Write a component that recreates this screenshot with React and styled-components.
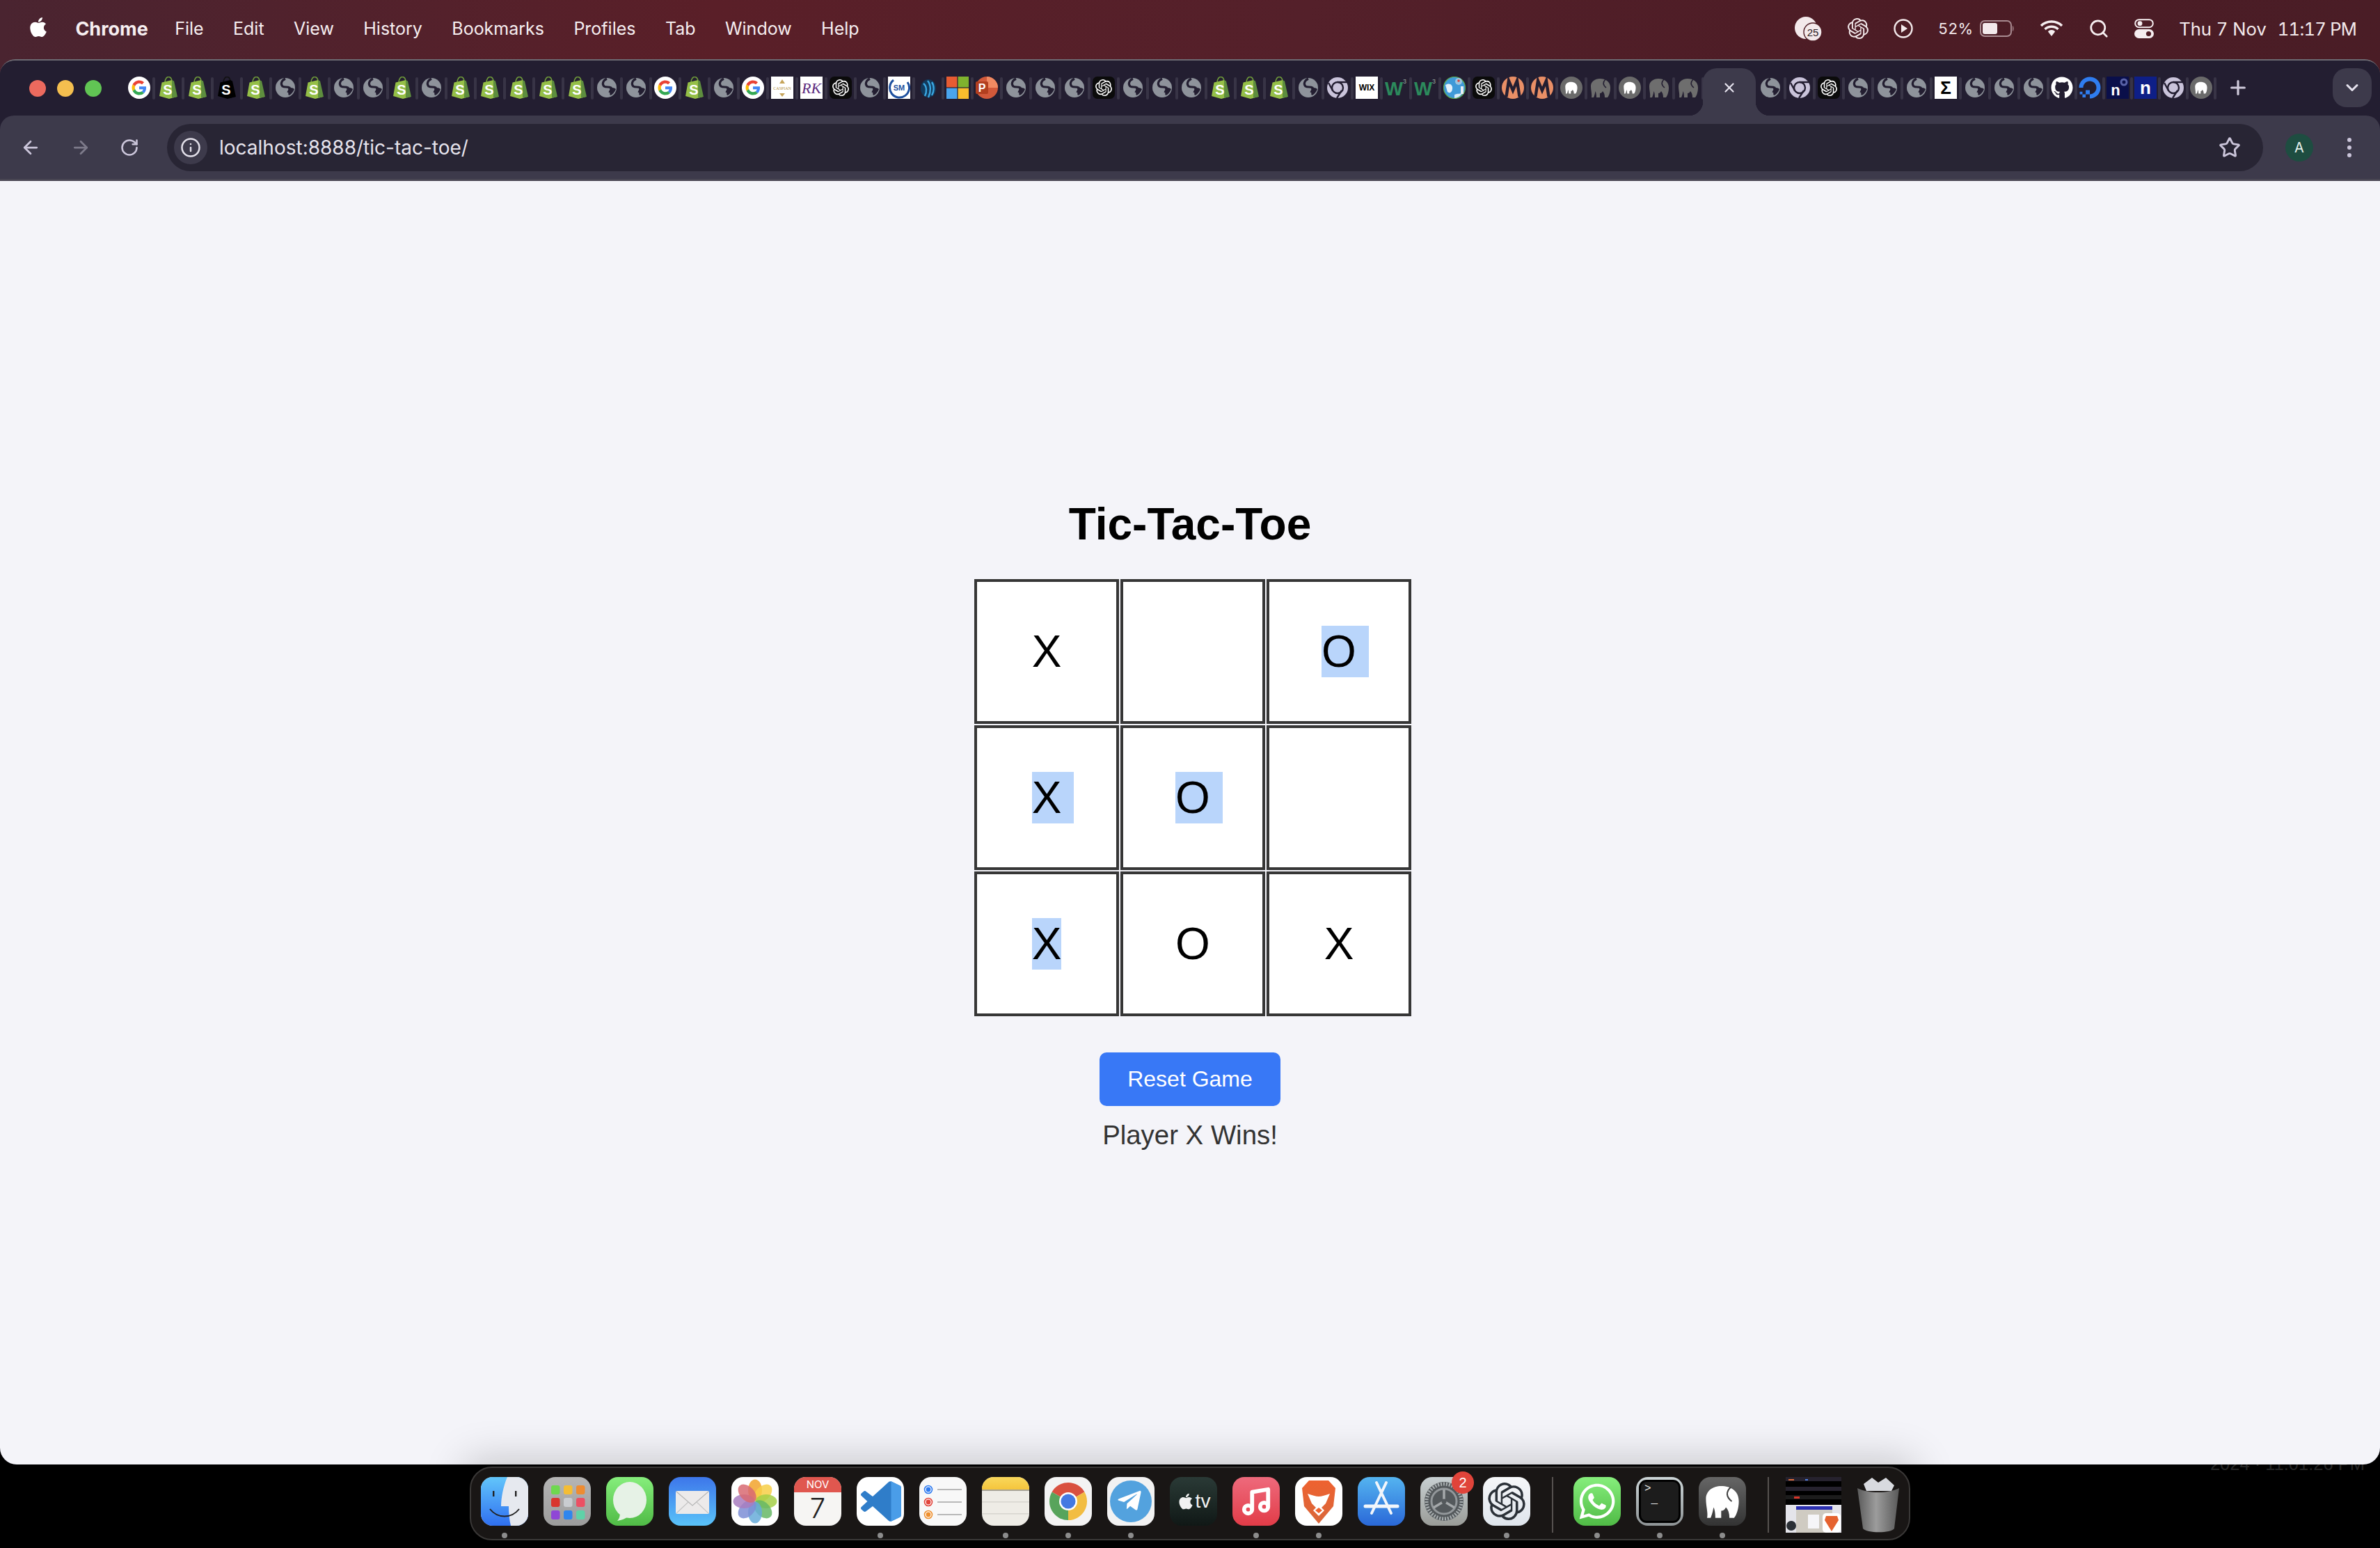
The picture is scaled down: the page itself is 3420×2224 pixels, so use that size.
import React from 'react';
import styled, { createGlobalStyle } from 'styled-components';
import { ArrowLeft, ArrowRight, RotateCw, Info, Star, Plus, ChevronDown, X, Search, Music } from 'lucide-react';
import { FaApple, FaGithub, FaWhatsapp, FaDigitalOcean, FaTelegramPlane } from 'react-icons/fa';
import { SiOpenai } from 'react-icons/si';

const GlobalStyle = createGlobalStyle`
  html, body { margin: 0; padding: 0; background: #000; }
  * { box-sizing: border-box; }
`;

const Screen = styled.div`
  position: relative;
  width: 3420px;
  height: 2224px;
  overflow: hidden;
  display: flex;
  flex-direction: column;
  background: linear-gradient(90deg, #4a2430 0%, #5a1f28 30%, #54202a 55%, #4c1c25 80%, #4a1d26 100%) top / 100% 120px no-repeat #000;
  font-family: Inter, "Liberation Sans", sans-serif;
`;

const WallpaperText = styled.div`
  position: absolute;
  right: 22px;
  bottom: 106px;
  font-size: 25.5px;
  color: #262626;
  font-family: "Liberation Sans", sans-serif;
`;

/* ---- mac menu bar ---- */
const MenuBar = styled.div`
  height: 85px;
  flex: none;
  display: flex;
  align-items: center;
  justify-content: space-between;
  padding: 0 34px 3px 41px;
  color: #fff;
`;

const MenuLeft = styled.div`
  display: flex;
  align-items: center;
  gap: 42.4px;
`;

const AppleLogo = styled(FaApple)`
  width: 28px;
  height: 32px;
  margin-right: -3px;
  margin-bottom: 4px;
`;

const MenuItem = styled.span`
  font-size: ${(props) => (props.$bold ? 27 : 25)}px;
  font-weight: ${(props) => (props.$bold ? 700 : 400)};
  margin-right: ${(props) => (props.$bold ? -4 : 0)}px;
  color: #f6eef0;
`;

const StatusArea = styled.div`
  display: flex;
  align-items: center;
  gap: 36px;
`;

const StatusGroup = styled.div`
  display: flex;
  align-items: center;
  gap: ${(props) => props.$gap}px;
`;

const StatusText = styled.span`
  font-size: ${(props) => props.$size || 25.6}px;
  font-variant-numeric: tabular-nums;
  letter-spacing: ${(props) => (props.$tight ? -0.8 : 0)}px;
  color: #f3e9eb;
  white-space: nowrap;
`;

/* ---- browser ---- */
const Browser = styled.div`
  position: relative;
  z-index: 1;
  height: 2019px;
  flex: none;
  display: flex;
  flex-direction: column;
  border-radius: 22px 22px 24px 24px;
  border-top: 2px solid #6c6a72;
  overflow: hidden;
  background: #231e31;
`;

const TabStrip = styled.div`
  height: 79px;
  flex: none;
  display: flex;
  align-items: flex-end;
  padding-left: 179px;
  background: #231e31;
`;

const Lights = styled.div`
  position: absolute;
  top: 28px;
  left: 42px;
  display: flex;
  gap: 16px;
`;

const Light = styled.span`
  width: 24px;
  height: 24px;
  border-radius: 50%;
  background: ${(props) => props.$color};
`;

const TabCell = styled.div`
  position: relative;
  width: ${(props) => props.$w || 42}px;
  height: 68px;
  flex: none;
  display: flex;
  align-items: center;
  justify-content: center;
  padding-bottom: 12px;
  &::after {
    content: '';
    position: absolute;
    right: -2px;
    top: 13px;
    width: 4px;
    height: 32px;
    border-radius: 2px;
    background: #383446;
  }
`;

const ActiveTab = styled.div`
  position: relative;
  width: 76px;
  height: 68px;
  flex: none;
  display: flex;
  align-items: center;
  justify-content: center;
  padding-bottom: 12px;
  background: #3d3a4b;
  border-radius: 20px 20px 0 0;
  color: #e6e3ee;
  &::before, &::after {
    content: '';
    position: absolute;
    bottom: 0;
    width: 20px;
    height: 20px;
  }
  &::before {
    left: -20px;
    background: radial-gradient(circle at 0 0, transparent 20px, #3d3a4b 20.5px);
  }
  &::after {
    right: -20px;
    background: radial-gradient(circle at 100% 0, transparent 20px, #3d3a4b 20.5px);
  }
`;

const NewTab = styled.div`
  margin-left: 17px;
  height: 68px;
  display: flex;
  align-items: center;
  padding-bottom: 12px;
  color: #cfcadb;
`;

const TabSearch = styled.div`
  position: absolute;
  top: 11px;
  right: 12px;
  width: 56px;
  height: 56px;
  border-radius: 20px;
  background: #3d3a4b;
  display: flex;
  align-items: center;
  justify-content: center;
  color: #e6e3ee;
`;

const Toolbar = styled.div`
  height: 94px;
  flex: none;
  display: flex;
  align-items: center;
  padding: 0 16px 0 0;
  background: #3d3a4b;
  border-radius: 20px 20px 0 0;
  border-bottom: 3px solid #494653;
`;

const NavButton = styled.div`
  width: ${(props) => props.$w}px;
  flex: none;
  display: flex;
  justify-content: center;
  color: ${(props) => (props.$dim ? '#7d7a8a' : '#cbc5da')};
`;

const Omnibox = styled.div`
  width: 3012px;
  height: 68px;
  margin-left: 12px;
  flex: none;
  display: flex;
  align-items: center;
  padding: 0 10px;
  border-radius: 34px;
  background: #282534;
`;

const InfoChip = styled.div`
  width: 48px;
  height: 48px;
  border-radius: 50%;
  background: #3d3a4b;
  display: flex;
  align-items: center;
  justify-content: center;
  color: #e3e0ea;
`;

const AddressText = styled.span`
  margin-left: 17px;
  font-size: 28px;
  color: #e6e3ec;
  flex: 1;
`;

const Avatar = styled.div`
  width: 40px;
  height: 40px;
  margin-left: 32px;
  border-radius: 50%;
  background: #1e4d41;
  display: flex;
  align-items: center;
  justify-content: center;
  color: #e8f2ee;
  font-size: 20px;
`;

const MoreDots = styled.div`
  margin-left: 49px;
  display: flex;
  flex-direction: column;
  gap: 5px;
  span {
    width: 6px;
    height: 6px;
    border-radius: 50%;
    background: #cbc5da;
  }
`;

/* ---- the page itself ---- */
const Page = styled.div`
  position: relative;
  flex: 1;
  overflow: hidden;
  background: #f4f4f9;
  display: flex;
  flex-direction: column;
  align-items: center;
  padding-top: 456px;
  font-family: "Liberation Sans", Arial, sans-serif;
`;

const DockShadow = styled.div`
  position: absolute;
  left: 675px;
  bottom: -60px;
  width: 2070px;
  height: 60px;
  box-shadow: 0 0 60px 6px rgba(0, 0, 0, 0.2);
`;

const Title = styled.h1`
  margin: 0 0 42px;
  font-size: 64px;
  line-height: 74px;
  font-weight: 700;
  color: #000;
`;

const Board = styled.div`
  width: 620px;
  display: grid;
  grid-template-columns: repeat(3, 208px);
  grid-auto-rows: 208px;
  gap: 2px;
`;

const Cell = styled.div`
  border: 4px solid #363636;
  background: #fff;
  display: flex;
  align-items: center;
  justify-content: center;
  font-size: 64px;
  line-height: 74px;
  color: #000;
`;

const Mark = styled.span`
  background: ${(props) => (props.$selected ? '#b9d5fb' : 'transparent')};
  box-shadow: ${(props) => (props.$tail ? '18px 0 0 #b9d5fb' : 'none')};
`;

const ResetButton = styled.button`
  width: 260px;
  height: 77px;
  margin-top: 52px;
  border: 0;
  border-radius: 10px;
  background: #3878f6;
  color: #fff;
  font-family: inherit;
  font-size: 32px;
`;

const Status = styled.div`
  margin-top: 20px;
  font-size: 38.4px;
  color: #333;
`;

/* ---- dock ---- */
const DockRow = styled.div`
  display: flex;
  justify-content: center;
  padding-top: 3px;
`;

const Dock = styled.div`
  width: 2070px;
  height: 106px;
  display: flex;
  align-items: flex-start;
  gap: 22px;
  padding: 13px 0 0 14px;
  background: #191615;
  border: 2px solid #3a3837;
  border-radius: 32px;
`;

const DockItem = styled.div`
  position: relative;
  flex: none;
  width: ${(props) => props.$w || 68}px;
  &::after {
    content: '';
    display: ${(props) => (props.$running ? 'block' : 'none')};
    position: absolute;
    left: 50%;
    bottom: -18px;
    width: 8px;
    height: 8px;
    margin-left: -4px;
    border-radius: 50%;
    background: #8c8c8c;
  }
`;

const Tile = styled.div`
  width: 68px;
  height: 70px;
  border-radius: 17px;
  overflow: hidden;
  display: flex;
  align-items: center;
  justify-content: center;
  background: ${(props) => props.$bg};
  color: ${(props) => props.$fg || '#fff'};
  svg { display: block; }
`;

const DockDivider = styled.div`
  width: 2px;
  height: 80px;
  margin: 0 ${(props) => props.$right}px 0 9px;
  flex: none;
  background: #55514f;
`;

const DockBadge = styled.span`
  position: absolute;
  top: -8px;
  right: -9px;
  width: 32px;
  height: 32px;
  border-radius: 50%;
  background: #e0443a;
  color: #fff;
  font-size: 20px;
  display: flex;
  align-items: center;
  justify-content: center;
  font-family: "Liberation Sans", sans-serif;
`;

/* ---- favicons, all in a 32 box ---- */
const Svg32 = ({ children }) => (
  <svg width="32" height="32" viewBox="0 0 32 32">{children}</svg>
);

const GoogleMark = () => (
  <Svg32>
    <circle cx="16" cy="16" r="16" fill="#fff" />
    <g transform="translate(5.5 5.5) scale(.4375)">
      <path fill="#EA4335" d="M24 9.5c3.54 0 6.71 1.22 9.21 3.6l6.85-6.85C35.9 2.38 30.47 0 24 0 14.62 0 6.51 5.38 2.56 13.22l7.98 6.19C12.43 13.72 17.74 9.5 24 9.5z" />
      <path fill="#4285F4" d="M46.98 24.55c0-1.57-.15-3.09-.38-4.55H24v9.02h12.94c-.58 2.96-2.26 5.48-4.78 7.18l7.73 6c4.51-4.18 7.09-10.36 7.09-17.65z" />
      <path fill="#FBBC05" d="M10.53 28.59c-.48-1.45-.76-2.99-.76-4.59s.27-3.14.76-4.59l-7.98-6.19C.92 16.46 0 20.12 0 24c0 3.88.92 7.54 2.56 10.78l7.97-6.19z" />
      <path fill="#34A853" d="M24 48c6.48 0 11.93-2.13 15.89-5.81l-7.73-6c-2.15 1.45-4.92 2.3-8.16 2.3-6.26 0-11.57-4.22-13.47-9.91l-7.98 6.19C6.51 42.62 14.62 48 24 48z" />
    </g>
  </Svg32>
);

const ShopifyBag = ({ dark }) => (
  <Svg32>
    <path d="M11 9 C11 3 14 0.5 16 0.5 C19 0.5 21 3 21 8" fill="none" stroke={dark ? '#111' : '#6f9b3a'} strokeWidth="1.6" />
    <path d="M3 28 L6.5 8.5 L21 5 L28 29 L17 32 Z" fill={dark ? '#000' : '#95bf47'} />
    <path d="M21 5 L24 6.5 L29 29 L21 30.8 Z" fill={dark ? '#000' : '#5e8e3e'} />
    <text x="15" y="26" textAnchor="middle" fontSize="20" fontWeight="700" fontFamily="Liberation Sans, sans-serif" fill="#fff">S</text>
  </Svg32>
);

const WorldGlobe = () => (
  <Svg32>
    <circle cx="16" cy="16" r="14" fill="#8e939b" />
    <path d="M16 3 C10 6 9 11 12 14 C15 16 19 14 22 16 C24 18 21 20 20 23" fill="none" stroke="#231e31" strokeWidth="3.2" />
    <path d="M20 17 C23 15 27 16 29 18 C27 23 24 26 21 27 C19 24 22 21 20 17 Z" fill="#231e31" />
  </Svg32>
);

const GptSquare = () => (
  <Svg32>
    <rect width="32" height="32" rx="7" fill="#0b0b0b" />
    <SiOpenai x="4" y="4" size="24" color="#fff" />
  </Svg32>
);

const ChromeGrey = () => (
  <Svg32>
    <circle cx="16" cy="16" r="15" fill="#cac4db" />
    <circle cx="16" cy="16" r="8" fill="#cac4db" stroke="#231e31" strokeWidth="2.4" />
    <path d="M16 8 H30 M9 20 L3 9 M22 20 L15 31" stroke="#231e31" strokeWidth="2.4" />
  </Svg32>
);

const SquareText = ({ bg, fg, size, children, family, weight, style }) => (
  <Svg32>
    <rect width="32" height="32" fill={bg} />
    <text x="16" y="16" dy=".36em" textAnchor="middle" fontSize={size} fontWeight={weight || 400} fontStyle={style} fontFamily={family || 'Liberation Sans, sans-serif'} fill={fg}>{children}</text>
  </Svg32>
);

const SwirlMark = () => (
  <Svg32>
    <ellipse cx="16" cy="17" rx="11" ry="13" fill="#123a5c" />
    <path d="M9 10 C14 14 14 22 11 28 M15 6 C20 12 20 22 16 30 M21 8 C25 14 24 22 21 27" fill="none" stroke="#3aa5e0" strokeWidth="2.4" />
  </Svg32>
);

const MsLogo = () => (
  <Svg32>
    <rect x="0" y="0" width="15.4" height="15.4" fill="#e65c33" />
    <rect x="16.6" y="0" width="15.4" height="15.4" fill="#7fb22e" />
    <rect x="0" y="16.6" width="15.4" height="15.4" fill="#4aa5ee" />
    <rect x="16.6" y="16.6" width="15.4" height="15.4" fill="#f9bc2d" />
  </Svg32>
);

const PowerPointMark = () => (
  <Svg32>
    <circle cx="16" cy="16" r="16" fill="#d2593a" />
    <path d="M16 0 A16 16 0 0 1 32 16 H16 Z" fill="#f08a62" />
    <rect x="0" y="7" width="18" height="18" rx="2" fill="#b23f1f" />
    <text x="9" y="21.5" textAnchor="middle" fontSize="16" fontWeight="700" fontFamily="Liberation Sans, sans-serif" fill="#fff">P</text>
  </Svg32>
);

const W3Mark = () => (
  <Svg32>
    <text x="13" y="27" textAnchor="middle" fontSize="28" fontWeight="700" fontFamily="Liberation Sans, sans-serif" fill="#2c8a5c" textLength="26" lengthAdjust="spacingAndGlyphs">W</text>
    <text x="28.5" y="10" textAnchor="middle" fontSize="9" fontFamily="Liberation Sans, sans-serif" fill="#9aa7a0">3</text>
  </Svg32>
);

const EarthMark = () => (
  <Svg32>
    <circle cx="16" cy="16" r="15.5" fill="#3f9ad8" stroke="#5ea84d" strokeWidth="1.2" />
    <path d="M3 12 C9 8 14 12 13 18 C12 24 8 24 6 22 Z" fill="#e4f1fa" />
    <path d="M16 26 C20 24 25 25 27 24 C25 28 20 31 16 31 Z" fill="#d8ebf6" />
    <circle cx="22" cy="7" r="5" fill="#9cc5df" />
    <circle cx="22" cy="6" r="1.8" fill="#d6433a" />
    <rect x="25" y="14" width="4" height="11" fill="#e8eef2" />
  </Svg32>
);

const MamboMark = () => (
  <Svg32>
    <circle cx="16" cy="16" r="16" fill="#e98f66" />
    <path d="M6.5 29 L10 6 L16 20 L22 6 L25.5 29" fill="none" stroke="#231e31" strokeWidth="4.4" />
  </Svg32>
);

const elephantPath = 'M2 14 C2 7 8 3 15 3 C23 3 30 7 30 16 C30 22 28 28 26 30 H22 C22 26 21 23 19 21 C18 23 17 24 15 24 L15 30 H10 C10 26 9.5 23 8.5 21 C8 24 7 28 6 30 H3 C4 26 2 20 2 14 Z';

const ElephantMark = () => (
  <Svg32>
    <path d={elephantPath} fill="#6e6e6e" />
    <path d="M23 4 C19 8 19 12 24 16" fill="none" stroke="#231e31" strokeWidth="1.6" />
  </Svg32>
);

const MampDark = () => (
  <Svg32>
    <circle cx="16" cy="16" r="16" fill="#6a6a6a" />
    <g transform="translate(6 6) scale(.62)"><path d={elephantPath} fill="#fff" /></g>
  </Svg32>
);

const SmBadge = () => (
  <Svg32>
    <rect width="32" height="32" fill="#fff" />
    <path d="M28 8 A14 14 0 1 1 8 5" fill="none" stroke="#1d4f9e" strokeWidth="3" />
    <text x="16" y="20" textAnchor="middle" fontSize="11" fontWeight="700" fontFamily="Liberation Sans, sans-serif" fill="#1d4f9e">SM</text>
  </Svg32>
);

const CaspianBadge = () => (
  <Svg32>
    <rect width="32" height="32" fill="#fff" />
    <path d="M16 4 L20 10 H12 Z" fill="#c6a45a" />
    <text x="16" y="19" textAnchor="middle" fontSize="6" fontFamily="Liberation Serif, serif" fill="#b08d3e">CASPIAN</text>
    <path d="M12 24 H20 L16 29 Z" fill="#c6a45a" />
  </Svg32>
);

const N8nBadge = () => (
  <Svg32>
    <rect width="32" height="32" fill="#0a0f4a" />
    <text x="13" y="27" textAnchor="middle" fontSize="22" fontWeight="700" fontFamily="Liberation Sans, sans-serif" fill="#fff">n</text>
    <circle cx="25" cy="8" r="4" fill="none" stroke="#5a63a8" strokeWidth="3" />
  </Svg32>
);

const DoMark = () => <FaDigitalOcean size={32} color="#2f7df0" />;

const FAVICONS = {
  g: GoogleMark,
  s: ShopifyBag,
  k: () => <ShopifyBag dark />,
  o: WorldGlobe,
  a: GptSquare,
  c: ChromeGrey,
  cas: CaspianBadge,
  rk: () => <SquareText bg="#fff" fg="#5b2a7e" size={22} family="Liberation Serif, serif" style="italic">RK</SquareText>,
  sm: SmBadge,
  sw: SwirlMark,
  ms: MsLogo,
  pp: PowerPointMark,
  wx: () => <SquareText bg="#fff" fg="#000" size={12} weight={700}>WIX</SquareText>,
  w3: W3Mark,
  e: EarthMark,
  m: MamboMark,
  d: MampDark,
  l: ElephantMark,
  sg: () => <SquareText bg="#fff" fg="#000" size={26} weight={700}>Σ</SquareText>,
  gh: () => <FaGithub size={32} color="#fff" />,
  dg: DoMark,
  n8: N8nBadge,
  n: () => <SquareText bg="#0e1f87" fg="#fff" size={26} weight={700}>n</SquareText>,
};

const TABS_BEFORE = 'g s s k s o s o o s o s s s s s o o g s o g cas rk a o sm sw ms pp o o o a o o o s s s o c wx w3 w3 e a m m d l d l l'.split(' ');
const TABS_AFTER = 'o c a o o o sg o o o gh dg n8 n c d'.split(' ');

const Favicon = ({ kind }) => {
  const Icon = FAVICONS[kind];
  return <Icon />;
};

/* ---- menu bar glyphs ---- */
const BackupBadge = () => (
  <svg width="40" height="36" viewBox="0 0 40 36">
    <circle cx="16" cy="17" r="16" fill="#f3e9eb" />
    <circle cx="26" cy="23" r="13" fill="#f3e9eb" stroke="#4e1d25" strokeWidth="1.4" />
    <text x="26" y="29" textAnchor="middle" fontSize="15" fontFamily="Liberation Sans, sans-serif" fill="#2a2024">25</text>
  </svg>
);

const PlayCircle = () => (
  <svg width="28" height="28" viewBox="0 0 28 28">
    <circle cx="14" cy="14" r="12.5" fill="none" stroke="#f3e9eb" strokeWidth="2.4" />
    <path d="M11 8 L20 14 L11 20 Z" fill="#f3e9eb" />
  </svg>
);

const Battery = () => (
  <svg width="50" height="24" viewBox="0 0 50 24">
    <rect x="1" y="1" width="44" height="22" rx="6" fill="none" stroke="#a88a90" strokeWidth="2" />
    <rect x="4" y="4" width="21" height="16" rx="3" fill="#f3e9eb" />
    <path d="M47 8 C49 9 49 15 47 16 Z" fill="#a88a90" />
  </svg>
);

const WifiGlyph = () => (
  <svg width="34" height="26" viewBox="0 0 34 26">
    <path d="M2 9 C10 1 24 1 32 9" fill="none" stroke="#f6eef0" strokeWidth="3.4" />
    <path d="M7.5 14 C13 9 21 9 26.5 14" fill="none" stroke="#f6eef0" strokeWidth="3.4" />
    <path d="M17 15 C14 15 12 16.5 12 17.5 L17 24 L22 17.5 C22 16.5 20 15 17 15 Z" fill="#f6eef0" />
  </svg>
);

const ControlCenter = () => (
  <svg width="28" height="28" viewBox="0 0 28 28">
    <rect x="1.2" y="1.2" width="25.6" height="11" rx="5.5" fill="none" stroke="#f6eef0" strokeWidth="2" />
    <circle cx="8" cy="6.7" r="3.4" fill="#f6eef0" />
    <rect x="0" y="15" width="28" height="13" rx="6.5" fill="#f6eef0" />
    <circle cx="20.5" cy="21.5" r="3.6" fill="#4e1d25" />
  </svg>
);

/* ---- dock art ---- */
const FinderArt = () => (
  <svg width="68" height="70" viewBox="0 0 68 70">
    <defs>
      <linearGradient id="fb" x1="0" y1="0" x2="0" y2="1"><stop offset="0" stopColor="#62c6fb" /><stop offset="1" stopColor="#2f6ff0" /></linearGradient>
    </defs>
    <rect width="68" height="70" fill="url(#fb)" />
    <path d="M38 0 C32 14 29 30 29 42 H40 C40 52 41 62 43 70 H68 V0 Z" fill="#e6e9ef" />
    <rect x="17" y="20" width="2.4" height="8" fill="#222" />
    <rect x="49" y="20" width="2.4" height="8" fill="#222" />
    <path d="M13 46 C24 60 44 60 55 46" fill="none" stroke="#222" strokeWidth="2" />
  </svg>
);

const LaunchpadArt = () => {
  const colors = ['#6fd84f', '#f4bd35', '#ee8c32', '#d9362e', '#c9ccd0', '#ec4f63', '#8f47d6', '#2f86ee', '#5fd2a8'];
  return (
    <svg width="68" height="70" viewBox="0 0 68 70">
      {colors.map((c, i) => (
        <rect key={c} x={11 + (i % 3) * 18} y={12 + Math.floor(i / 3) * 18} width="12.5" height="13" rx="3" fill={c} />
      ))}
    </svg>
  );
};

const MessagesArt = () => (
  <svg width="68" height="70" viewBox="0 0 68 70">
    <ellipse cx="34" cy="33" rx="24" ry="26" fill="#e6f2e6" />
    <path d="M20 50 C20 56 19 60 16 63 C22 62 28 60 32 56 Z" fill="#e6f2e6" />
  </svg>
);

const MailArt = () => (
  <svg width="68" height="70" viewBox="0 0 68 70">
    <rect x="10" y="20" width="48" height="33" rx="2" fill="#eceaea" />
    <path d="M11 21 L34 41 L57 21" fill="none" stroke="#b5b5b5" strokeWidth="1.2" />
    <path d="M11 52 L28 36 M57 52 L40 36" stroke="#c6c6c6" strokeWidth="1.2" />
  </svg>
);

const PhotosArt = () => {
  const petals = ['#f2a32c', '#f7cf46', '#a5cf47', '#66b765', '#67abd9', '#7d8ed6', '#a87dc0', '#d86a72'];
  return (
    <svg width="68" height="70" viewBox="0 0 68 70">
      {petals.map((c, i) => (
        <ellipse key={c} cx="34" cy="19" rx="10" ry="15.5" fill={c} opacity=".85" transform={`rotate(${i * 45} 34 35)`} />
      ))}
    </svg>
  );
};

const CalendarFace = styled.div`
  width: 100%;
  height: 100%;
  display: flex;
  flex-direction: column;
  align-items: center;
  font-family: Inter, "Liberation Sans", sans-serif;
`;

const CalendarMonth = styled.div`
  width: 100%;
  height: 22px;
  background: #e0574f;
  color: #fff;
  font-size: 15px;
  line-height: 22px;
  text-align: center;
`;

const CalendarDay = styled.div`
  font-size: 40px;
  font-weight: 300;
  line-height: 46px;
  color: #222;
`;

const VsCodeArt = () => (
  <svg width="68" height="70" viewBox="0 0 68 70">
    <g transform="translate(6 6) scale(.58)">
      <path fill="#2f7dc9" d="M70.9119 99.3171C72.4869 99.9307 74.2828 99.8914 75.8725 99.1264L96.4608 89.2197C98.6242 88.1787 100 85.9892 100 83.5872V16.4133C100 14.0113 98.6243 11.8218 96.4609 10.7808L75.8725 0.873756C73.7862 -0.130129 71.3446 0.11576 69.5135 1.44695C69.252 1.63711 69.0028 1.84943 68.769 2.08341L29.3551 38.0415L12.1872 25.0096C10.589 23.7965 8.35363 23.8959 6.86933 25.2461L1.36303 30.2549C-0.452552 31.9064 -0.454633 34.7627 1.35853 36.417L16.2471 50.0001L1.35853 63.5832C-0.454633 65.2374 -0.452552 68.0938 1.36303 69.7453L6.86933 74.7541C8.35363 76.1043 10.589 76.2037 12.1872 74.9905L29.3551 61.9587L68.769 97.9167C69.3925 98.5406 70.1246 99.0104 70.9119 99.3171ZM75.0152 27.2989L45.1091 50.0001L75.0152 72.7012V27.2989Z" />
      <path fill="#4a9de8" d="M75 0.4 L96.5 10.8 C98.6 11.8 100 14 100 16.4 V83.6 C100 86 98.6 88.2 96.5 89.2 L75 99.6 Z" />
    </g>
  </svg>
);

const RemindersArt = () => (
  <svg width="68" height="70" viewBox="0 0 68 70">
    {[['#2f7bf0', 18], ['#e2453c', 36], ['#ee8f2e', 54]].map(([c, y]) => (
      <g key={c}>
        <circle cx="13" cy={y} r="5.5" fill="#fff" stroke={c} strokeWidth="1.6" />
        <circle cx="13" cy={y} r="3.4" fill={c} />
        <rect x="26" y={y - 1} width="35" height="2" fill="#b9b9b9" />
      </g>
    ))}
  </svg>
);

const NotesArt = () => (
  <svg width="68" height="70" viewBox="0 0 68 70">
    <defs>
      <linearGradient id="ny" x1="0" y1="0" x2="0" y2="1"><stop offset="0" stopColor="#f9d85c" /><stop offset="1" stopColor="#f5c53c" /></linearGradient>
    </defs>
    <rect width="68" height="18" fill="url(#ny)" />
    <rect y="18" width="68" height="2" fill="#a8a396" />
    <rect y="35" width="68" height="1.6" fill="#d8d6d0" />
    <rect y="52" width="68" height="1.6" fill="#d8d6d0" />
  </svg>
);

const ChromeArt = () => (
  <svg width="68" height="70" viewBox="0 0 68 70">
    <path d="M34 35 L10.6 21.5 A27 27 0 0 1 57.4 21.5 Z" fill="#d9503f" />
    <path d="M34 35 L10.6 21.5 A27 27 0 0 0 34 62 Z" fill="#58a45c" />
    <path d="M34 35 L57.4 21.5 A27 27 0 0 1 34 62 Z" fill="#f2bd42" />
    <circle cx="34" cy="35" r="13" fill="#fff" />
    <circle cx="34" cy="35" r="10.5" fill="#4479e2" />
  </svg>
);

const TelegramArt = () => (
  <svg width="68" height="70" viewBox="0 0 68 70">
    <circle cx="34" cy="35" r="30" fill="#53a2de" />
    <FaTelegramPlane x="13" y="15" size="38" color="#fff" />
  </svg>
);

const TvLabel = styled.div`
  display: flex;
  align-items: center;
  gap: 1px;
  font-size: 28px;
  font-family: "Liberation Sans", sans-serif;
  color: #f2f2f2;
`;

const BraveArt = () => (
  <svg width="68" height="70" viewBox="0 0 68 70">
    <defs>
      <linearGradient id="br" x1="0" y1="0" x2="0" y2="1"><stop offset="0" stopColor="#ee6230" /><stop offset="1" stopColor="#d9663a" /></linearGradient>
    </defs>
    <path d="M20 5 H48 L58 16 L55 42 L34 67 L13 42 L10 16 Z" fill="url(#br)" />
    <path d="M18 24 C24 26 30 28 34 28 C38 28 44 26 50 24 L44 38 L38 44 L42 48 L34 56 L26 48 L30 44 L24 38 Z" fill="#fff" />
    <path d="M29 48 L34 44 L39 48 L34 52 Z" fill="#ee6230" />
  </svg>
);

const AppStoreArt = () => (
  <svg width="68" height="70" viewBox="0 0 68 70">
    <path d="M27 8 L48 52 M41 8 L20 52" stroke="#f2f6fb" strokeWidth="4" strokeLinecap="round" />
    <path d="M11 42 H57" stroke="#f2f6fb" strokeWidth="5" strokeLinecap="round" />
  </svg>
);

const SettingsArt = () => (
  <svg width="68" height="70" viewBox="0 0 68 70">
    <circle cx="34" cy="35" r="28" fill="#54595c" />
    <circle cx="34" cy="35" r="25" fill="none" stroke="#aab0b2" strokeWidth="5" strokeDasharray="2 2" />
    <circle cx="34" cy="35" r="18" fill="none" stroke="#93989b" strokeWidth="3" />
    <path d="M34 35 L34 18 M34 35 L19 44 M34 35 L49 44" stroke="#a4a8aa" strokeWidth="3.5" />
    <circle cx="34" cy="35" r="3.5" fill="#54595c" />
  </svg>
);

const TerminalInner = styled.div`
  width: 60px;
  height: 62px;
  padding: 2px 5px;
  border-radius: 11px;
  background: #1c1c1c;
  border: 3px solid #000;
  color: #eee;
  font-size: 16px;
  line-height: 16px;
  font-family: "Liberation Mono", monospace;
`;

const ElephantDock = () => (
  <svg width="54" height="54" viewBox="0 0 32 32">
    <path d={elephantPath} fill="#fff" />
    <path d="M23 4 C19 8 19 12 24 16" fill="none" stroke="#3f3f3f" strokeWidth="1.2" />
  </svg>
);

const ScreenshotThumb = () => (
  <svg width="80" height="80" viewBox="0 0 80 80">
    <rect width="80" height="80" fill="#000" />
    <rect y="0" width="80" height="6" fill="#26222e" />
    <rect y="14" width="80" height="6" fill="#26222e" />
    <rect x="4" y="3" width="8" height="2" fill="#d96a3a" />
    <rect x="28" y="3" width="4" height="2" fill="#4c7fe0" />
    <rect y="26" width="80" height="6" fill="#1c1c1c" />
    <rect x="12" y="28" width="8" height="3" fill="#d9352a" />
    <rect y="40" width="80" height="40" fill="#e4e4ea" />
    <rect x="15" y="42" width="52" height="5" fill="#2a2fb0" />
    <rect x="15" y="47" width="52" height="33" fill="#cfcbc2" />
    <rect x="32" y="54" width="16" height="20" fill="#f5f5f8" />
    <rect x="53" y="52" width="26" height="28" rx="5" fill="#fff" />
    <path d="M58 56 H74 L76 62 L66 78 L56 62 Z" fill="#e5622f" />
    <circle cx="8" cy="70" r="7" fill="#2b3036" />
  </svg>
);

const TrashArt = () => (
  <svg width="62" height="80" viewBox="0 0 62 80">
    <defs>
      <linearGradient id="tr" x1="0" y1="0" x2="1" y2="0"><stop offset="0" stopColor="#5b5b5b" /><stop offset=".45" stopColor="#9c9c9c" /><stop offset="1" stopColor="#585858" /></linearGradient>
    </defs>
    <path d="M10 10 L22 1 L31 8 L42 1 L54 12 L50 20 H14 Z" fill="#d8dadf" />
    <path d="M1 16 C18 24 44 24 61 16 L54 74 C50 81 14 81 9 74 Z" fill="url(#tr)" />
  </svg>
);

const BOARD = [
  { v: 'X' }, { v: '' }, { v: 'O', sel: true, tail: true },
  { v: 'X', sel: true, tail: true }, { v: 'O', sel: true, tail: true }, { v: '' },
  { v: 'X', sel: true }, { v: 'O' }, { v: 'X' },
];

const MENUS = ['File', 'Edit', 'View', 'History', 'Bookmarks', 'Profiles', 'Tab', 'Window', 'Help'];

const App = () => (
  <Screen>
    <GlobalStyle />
    <WallpaperText>2024 · 11:01:26 PM</WallpaperText>

    <MenuBar>
      <MenuLeft>
        <AppleLogo />
        <MenuItem $bold>Chrome</MenuItem>
        {MENUS.map((m) => <MenuItem key={m}>{m}</MenuItem>)}
      </MenuLeft>
      <StatusArea>
        <BackupBadge />
        <SiOpenai size={30} color="#f3e9eb" />
        <PlayCircle />
        <StatusGroup $gap={10}>
          <StatusText $size={22}>52%</StatusText>
          <Battery />
        </StatusGroup>
        <WifiGlyph />
        <Search size={30} color="#f6eef0" strokeWidth={2.2} />
        <ControlCenter />
        <StatusGroup $gap={16}>
          <StatusText>Thu 7 Nov</StatusText>
          <StatusText $tight>11:17 PM</StatusText>
        </StatusGroup>
      </StatusArea>
    </MenuBar>

    <Browser>
      <Lights>
        <Light $color="#ec6a5e" />
        <Light $color="#f4bf4f" />
        <Light $color="#61c554" />
      </Lights>
      <TabStrip>
        {TABS_BEFORE.map((t, i) => (
          <TabCell key={i}><Favicon kind={t} /></TabCell>
        ))}
        <ActiveTab><X size={22} strokeWidth={2.4} /></ActiveTab>
        {TABS_AFTER.map((t, i) => (
          <TabCell key={i} $w={i > 9 ? 40 : 42}><Favicon kind={t} /></TabCell>
        ))}
        <NewTab><Plus size={32} strokeWidth={2.4} /></NewTab>
      </TabStrip>
      <TabSearch><ChevronDown size={28} strokeWidth={2.6} /></TabSearch>
      <Toolbar>
        <NavButton $w={88}><ArrowLeft size={30} strokeWidth={2.2} /></NavButton>
        <NavButton $dim $w={56}><ArrowRight size={30} strokeWidth={2.2} /></NavButton>
        <NavButton $w={84}><RotateCw size={28} strokeWidth={2.2} /></NavButton>
        <Omnibox>
          <InfoChip><Info size={30} strokeWidth={2} /></InfoChip>
          <AddressText>localhost:8888/tic-tac-toe/</AddressText>
          <NavButton $w={32}><Star size={32} strokeWidth={2.2} /></NavButton>
          <NavButton $w={22} />
        </Omnibox>
        <Avatar>A</Avatar>
        <MoreDots><span /><span /><span /></MoreDots>
      </Toolbar>

      <Page>
        <Title>Tic-Tac-Toe</Title>
        <Board>
          {BOARD.map((c, i) => (
            <Cell key={i}>
              {c.v && <Mark $selected={c.sel} $tail={c.tail}>{c.v}</Mark>}
            </Cell>
          ))}
        </Board>
        <ResetButton>Reset Game</ResetButton>
        <Status>Player X Wins!</Status>
        <DockShadow />
      </Page>
    </Browser>

    <DockRow>
      <Dock>
        <DockItem $running><Tile $bg="#e6e9ef"><FinderArt /></Tile></DockItem>
        <DockItem><Tile $bg="linear-gradient(#b5b5b5,#9c9c9c)"><LaunchpadArt /></Tile></DockItem>
        <DockItem><Tile $bg="linear-gradient(#86ee7c,#50bb46)"><MessagesArt /></Tile></DockItem>
        <DockItem><Tile $bg="linear-gradient(#3d76ea,#5ac3f9)"><MailArt /></Tile></DockItem>
        <DockItem><Tile $bg="#fff"><PhotosArt /></Tile></DockItem>
        <DockItem>
          <Tile $bg="#f6f5f3">
            <CalendarFace>
              <CalendarMonth>NOV</CalendarMonth>
              <CalendarDay>7</CalendarDay>
            </CalendarFace>
          </Tile>
        </DockItem>
        <DockItem $running><Tile $bg="#fff"><VsCodeArt /></Tile></DockItem>
        <DockItem><Tile $bg="#f8f8f8"><RemindersArt /></Tile></DockItem>
        <DockItem $running><Tile $bg="#eeece6"><NotesArt /></Tile></DockItem>
        <DockItem $running><Tile $bg="#f3f3f3"><ChromeArt /></Tile></DockItem>
        <DockItem $running><Tile $bg="#f2f2f2"><TelegramArt /></Tile></DockItem>
        <DockItem>
          <Tile $bg="linear-gradient(#2a3a36,#101816)">
            <TvLabel><FaApple size={26} />tv</TvLabel>
          </Tile>
        </DockItem>
        <DockItem $running><Tile $bg="linear-gradient(#ee6a7c,#e23c48)"><Music size={46} strokeWidth={3} /></Tile></DockItem>
        <DockItem $running><Tile $bg="#fff"><BraveArt /></Tile></DockItem>
        <DockItem><Tile $bg="linear-gradient(#54b4f0,#2a68d8)"><AppStoreArt /></Tile></DockItem>
        <DockItem>
          <Tile $bg="linear-gradient(#c8d0d2,#9a9c98)"><SettingsArt /></Tile>
          <DockBadge>2</DockBadge>
        </DockItem>
        <DockItem $running><Tile $bg="linear-gradient(#f6f7f9,#dfe5ec)" $fg="#2b3138"><SiOpenai size={54} /></Tile></DockItem>
        <DockDivider $right={7} />
        <DockItem $running><Tile $bg="linear-gradient(#86ee7c,#50bb46)"><FaWhatsapp size={58} /></Tile></DockItem>
        <DockItem $running>
          <Tile $bg="linear-gradient(#cdd6d8,#8f9496)"><TerminalInner>{'>'}<br />&nbsp;_</TerminalInner></Tile>
        </DockItem>
        <DockItem $running><Tile $bg="linear-gradient(#666,#333)"><ElephantDock /></Tile></DockItem>
        <DockDivider $right={2} />
        <DockItem $w={80}><ScreenshotThumb /></DockItem>
        <DockItem $w={62}><TrashArt /></DockItem>
      </Dock>
    </DockRow>
  </Screen>
);

export default App;
